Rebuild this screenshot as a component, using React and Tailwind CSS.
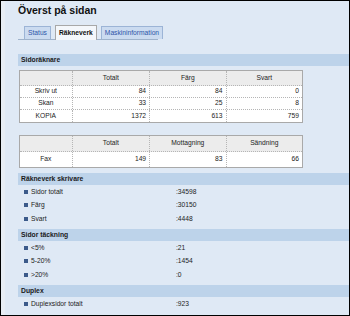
import React from "react";

const font = { fontFamily: '"Liberation Sans", Arial, sans-serif' };

function Band({ children }) {
  return (
    <div className="h-[12px] bg-[#bdd3ea] pl-[3px] flex items-center text-[6.8px] font-bold text-[#1a1a1a]">
      {children}
    </div>
  );
}

function Item({ label, value }) {
  return (
    <div className="h-[13.5px] flex items-center text-[6.7px] text-[#222]">
      <div className="w-[158px] flex items-center pl-[6px]">
        <span className="w-[4px] h-[4px] bg-[#3b5a8a] mr-[3px]" />
        <span>{label}</span>
      </div>
      <span>{value}</span>
    </div>
  );
}

function Table({ head, rows, headH, rowH }) {
  const cols = ["w-[53px]", "w-[78px]", "w-[77px]", "w-[76px]"];
  return (
    <div className="ml-[1px] w-[284px] border border-[#a9a9a9] text-[6.7px] text-[#222]">
      <div className={`flex ${headH} bg-[#ececec] border-b border-dotted border-[#b5b5b5]`}>
        {head.map((h, i) => (
          <div
            key={i}
            className={`${cols[i]} flex items-center justify-center ${i < 3 ? "border-r border-dotted border-[#b5b5b5]" : ""}`}
          >
            {h}
          </div>
        ))}
      </div>
      {rows.map((r, ri) => (
        <div
          key={ri}
          className={`flex ${rowH} bg-white ${ri < rows.length - 1 ? "border-b border-dotted border-[#b5b5b5]" : ""}`}
        >
          {r.map((c, i) => (
            <div
              key={i}
              className={`${cols[i]} flex items-center ${i === 0 ? "justify-center" : "justify-end pr-[3px]"} ${i < 3 ? "border-r border-dotted border-[#b5b5b5]" : ""}`}
            >
              {c}
            </div>
          ))}
        </div>
      ))}
    </div>
  );
}

export default function App() {
  return (
    <div style={font} className="w-[350px] h-[316px] border border-black bg-[#dfe9f5] overflow-hidden flex">
      <div className="w-[4px] bg-[#e7edf4] shrink-0" />
      <div className="flex-1 pl-[13px]">
        <div className="h-[20px] pt-[3px] text-[10.5px] font-bold text-[#111] leading-[13px]">
          Överst på sidan
        </div>
        <div className="w-[140px] h-[19px] border-b border-[#9fb3cc] flex items-end pl-[6px] gap-[4px]">
          <div className="h-[13px] px-[3px] border border-b-0 border-[#9cb4d6] bg-[#cbdbf0] text-[#2d55a8] text-[6.7px] flex items-center">
            Status
          </div>
          <div className="h-[15px] px-[3px] border border-b-0 border-[#a8a8a8] bg-[#f4f7fb] text-[#111] text-[6.7px] font-bold flex items-center -mb-[1px]">
            Räkneverk
          </div>
          <div className="h-[13px] px-[3px] border border-b-0 border-[#9cb4d6] bg-[#cbdbf0] text-[#2d55a8] text-[6.7px] flex items-center">
            Maskininformation
          </div>
        </div>
        <div className="h-[14px]" />
        <Band>Sidoräknare</Band>
        <div className="h-[4px]" />
        <Table
          headH="h-[15px]"
          rowH="h-[12px]"
          head={["", "Totalt", "Färg", "Svart"]}
          rows={[
            ["Skriv ut", "84", "84", "0"],
            ["Skan", "33", "25", "8"],
            ["KOPIA", "1372", "613", "759"],
          ]}
        />
        <div className="h-[12px]" />
        <Table
          headH="h-[16px]"
          rowH="h-[15px]"
          head={["", "Totalt", "Mottagning", "Sändning"]}
          rows={[["Fax", "149", "83", "66"]]}
        />
        <div className="h-[5px]" />
        <Band>Räkneverk skrivare</Band>
        <div className="pb-[3.5px]">
          <Item label="Sidor totalt" value=":34598" />
          <Item label="Färg" value=":30150" />
          <Item label="Svart" value=":4448" />
        </div>
        <Band>Sidor täckning</Band>
        <div className="pb-[3.5px]">
          <Item label="<5%" value=":21" />
          <Item label="5-20%" value=":1454" />
          <Item label=">20%" value=":0" />
        </div>
        <Band>Duplex</Band>
        <div>
          <Item label="Duplexsidor totalt" value=":923" />
        </div>
      </div>
    </div>
  );
}
